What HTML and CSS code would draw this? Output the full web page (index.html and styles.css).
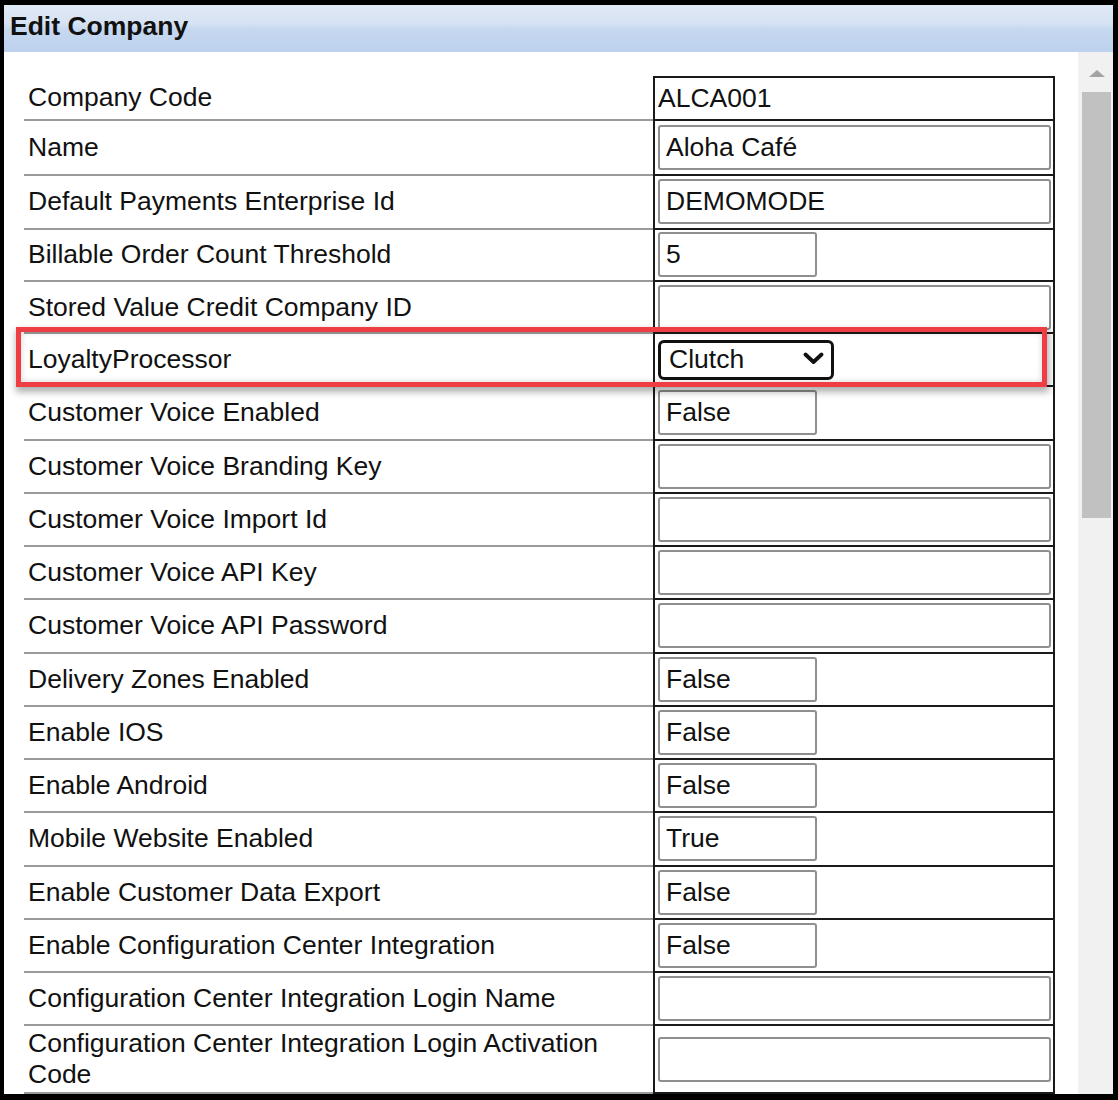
FILE: index.html
```html
<!DOCTYPE html>
<html lang="en">
<head>
<meta charset="utf-8">
<title>Edit Company</title>
<link rel="stylesheet" href="styles.css">
</head>
<body>
<div class="window">
  <div class="titlebar"><h1 class="title">Edit Company</h1></div>
  <div class="body">
    <div class="content">
      <div class="form">
        <div class="row row-first"><div class="label">Company Code</div><div class="value value-text">ALCA001</div></div>
        <div class="row"><div class="label">Name</div><div class="value"><input class="field field-wide" type="text" value="Aloha Café"></div></div>
        <div class="row"><div class="label">Default Payments Enterprise Id</div><div class="value"><input class="field field-wide" type="text" value="DEMOMODE"></div></div>
        <div class="row"><div class="label">Billable Order Count Threshold</div><div class="value"><input class="field field-short" type="text" value="5"></div></div>
        <div class="row"><div class="label">Stored Value Credit Company ID</div><div class="value"><input class="field field-wide" type="text" value=""></div></div>
        <div class="row"><div class="label">LoyaltyProcessor</div><div class="value"><div class="select"><span class="select-text">Clutch</span><svg class="chevron" width="21" height="13" viewBox="0 0 21 13"><polyline points="2.5,2.5 10.5,10 18.5,2.5" fill="none" stroke="#111" stroke-width="3.8" stroke-linecap="round" stroke-linejoin="round"/></svg></div></div></div>
        <div class="row"><div class="label">Customer Voice Enabled</div><div class="value"><input class="field field-short" type="text" value="False"></div></div>
        <div class="row"><div class="label">Customer Voice Branding Key</div><div class="value"><input class="field field-wide" type="text" value=""></div></div>
        <div class="row"><div class="label">Customer Voice Import Id</div><div class="value"><input class="field field-wide" type="text" value=""></div></div>
        <div class="row"><div class="label">Customer Voice API Key</div><div class="value"><input class="field field-wide" type="text" value=""></div></div>
        <div class="row"><div class="label">Customer Voice API Password</div><div class="value"><input class="field field-wide" type="text" value=""></div></div>
        <div class="row"><div class="label">Delivery Zones Enabled</div><div class="value"><input class="field field-short" type="text" value="False"></div></div>
        <div class="row"><div class="label">Enable IOS</div><div class="value"><input class="field field-short" type="text" value="False"></div></div>
        <div class="row"><div class="label">Enable Android</div><div class="value"><input class="field field-short" type="text" value="False"></div></div>
        <div class="row"><div class="label">Mobile Website Enabled</div><div class="value"><input class="field field-short" type="text" value="True"></div></div>
        <div class="row"><div class="label">Enable Customer Data Export</div><div class="value"><input class="field field-short" type="text" value="False"></div></div>
        <div class="row"><div class="label">Enable Configuration Center Integration</div><div class="value"><input class="field field-short" type="text" value="False"></div></div>
        <div class="row"><div class="label">Configuration Center Integration Login Name</div><div class="value"><input class="field field-wide" type="text" value=""></div></div>
        <div class="row row-last"><div class="label">Configuration Center Integration Login Activation Code</div><div class="value"><input class="field field-wide" type="text" value=""></div></div>
      </div>
      <div class="highlight"></div>
    </div>
    <div class="scrollbar">
      <div class="scroll-arrow"></div>
      <div class="scroll-thumb"></div>
    </div>
  </div>
</div>
</body>
</html>
```

FILE: styles.css
```css
html, body {
  margin: 0;
  padding: 0;
  background: #ffffff;
}

body {
  font-family: "Liberation Sans", Arial, sans-serif;
  color: #111;
}

.window {
  box-sizing: border-box;
  width: 1118px;
  height: 1100px;
  border-style: solid;
  border-color: #000;
  border-width: 5px 5px 6px 4px;
  display: flex;
  flex-direction: column;
  overflow: hidden;
  background: #fff;
}

.titlebar {
  flex: none;
  height: 47px;
  background: linear-gradient(to bottom, #e0e9f6 0%, #d7e3f3 38%, #c6d8f0 52%, #bdd1ed 100%);
}

.title {
  margin: 0;
  padding-left: 6px;
  font-size: 26.5px;
  font-weight: bold;
  line-height: 42px;
  color: #111;
}

.body {
  flex: 1;
  display: flex;
  min-height: 0;
  overflow: hidden;
}

.content {
  flex: 1;
  position: relative;
  padding: 24px 0 0 20px;
  overflow: hidden;
}

.form {
  width: 1031px;
}

.row {
  display: grid;
  grid-template-columns: 629px 402px;
  height: 53.25px;
}

.row-first {
  height: 45px;
}

.row:nth-child(2) {
  height: 55px;
}

.row:nth-child(3) {
  height: 53.5px;
}

.row:nth-child(4) {
  height: 52.5px;
}

.row:nth-child(5) {
  height: 52px;
}

.row-last {
  height: 67.75px;
}

.label {
  box-sizing: border-box;
  display: flex;
  align-items: center;
  padding: 0 0 0 4px;
  font-size: 26.5px;
  line-height: 31px;
  color: #111;
  border-bottom: 2px solid #9a9a9a;
}

.value {
  box-sizing: border-box;
  display: flex;
  align-items: center;
  padding: 0 2px 0 3px;
  border-left: 2px solid #1a1a1a;
  border-right: 2px solid #1a1a1a;
  border-bottom: 2px solid #1a1a1a;
}

.row-first .value {
  border-top: 2px solid #1a1a1a;
}

.value-text {
  font-size: 26.5px;
  color: #111;
}

.field {
  box-sizing: border-box;
  height: 45px;
  margin: 0;
  padding: 0 6px;
  border: 2px solid #8f8f8f;
  border-radius: 3px;
  background: #fff;
  font-family: "Liberation Sans", Arial, sans-serif;
  font-size: 26.5px;
  color: #111;
  outline: none;
}

.field-wide {
  width: 393px;
}

.field-short {
  width: 159px;
}

.select {
  box-sizing: border-box;
  width: 176px;
  height: 40px;
  border: 3px solid #111;
  border-radius: 6px;
  display: flex;
  align-items: center;
  justify-content: space-between;
  padding: 0 7px 0 8px;
  font-size: 26.5px;
  color: #111;
}

.chevron {
  display: block;
  margin-bottom: 2px;
}

.highlight {
  position: absolute;
  left: 12px;
  top: 275px;
  width: 1031px;
  height: 60px;
  box-sizing: border-box;
  border: 5px solid #ef3d44;
  box-shadow: 1px 4px 7px 1px rgba(0, 0, 0, 0.32), inset 0 0 6px rgba(0, 0, 0, 0.18);
  pointer-events: none;
}

.scrollbar {
  flex: none;
  width: 35px;
  box-sizing: border-box;
  padding-left: 2px;
  background: #f1f1f1;
  display: flex;
  flex-direction: column;
  align-items: center;
}

.scroll-arrow {
  margin-top: 18px;
  width: 0;
  height: 0;
  border-left: 8.5px solid transparent;
  border-right: 8.5px solid transparent;
  border-bottom: 7px solid #a3a3a3;
}

.scroll-thumb {
  margin-top: 15px;
  width: 29px;
  height: 426px;
  background: #c1c1c1;
}
```
